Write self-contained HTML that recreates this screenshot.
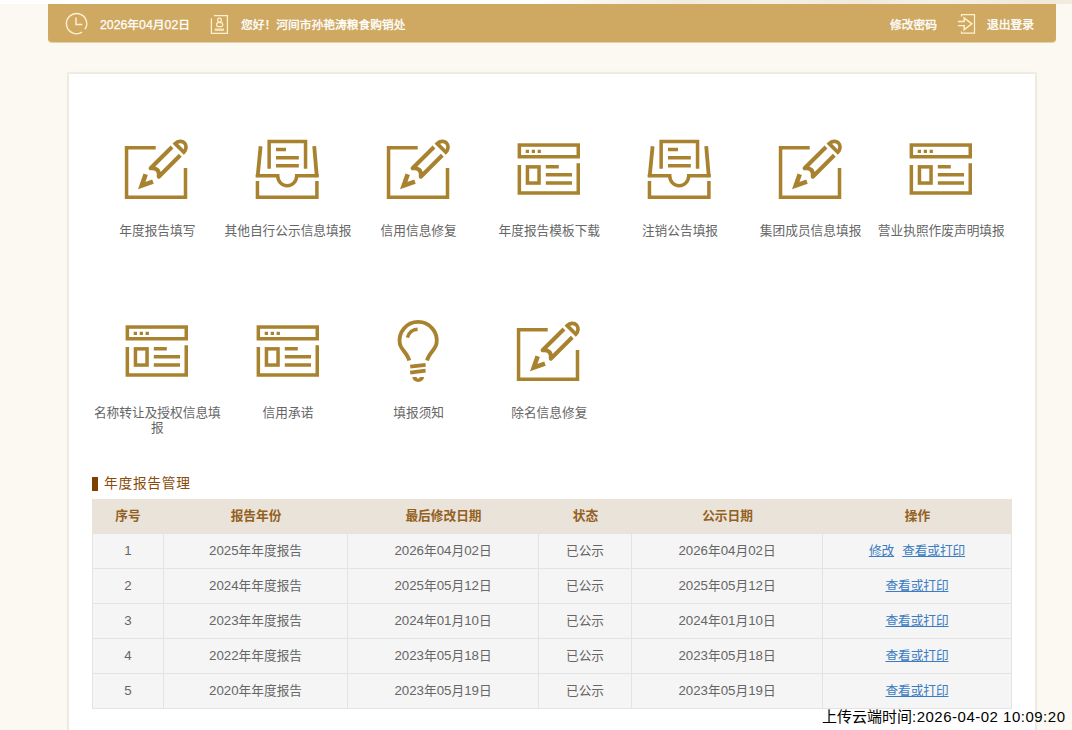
<!DOCTYPE html>
<html lang="zh-CN">
<head>
<meta charset="utf-8">
<title>企业信用信息公示系统</title>
<style>
*{box-sizing:border-box;margin:0;padding:0}
html,body{width:1072px;height:730px;overflow:hidden}
body{position:relative;background:#fbf9f1;font-family:"Liberation Sans","Noto Sans CJK SC",sans-serif;font-size:13px;color:#666;}
ul{list-style:none}
a{color:#3b7cc2;text-decoration:underline}
.deco{position:absolute;left:0;top:0;width:1072px;height:4px;background:linear-gradient(to right,#fff 0,#fff 50%,#f8f4ec 57%,#f1ebdf 64%,#f5f0e6 72%,#f0e9dc 80%,#f5f0e7 88%,#efe8da 96%,#f2ecdf 100%)}
.topbar{position:absolute;left:48px;top:4px;width:1008px;height:38px;background:#cfa961;border-radius:0 0 4px 4px;box-shadow:0 1px 0 rgba(207,169,97,.5);color:#fff;font-size:11.75px;line-height:39px}
.topbar span,.topbar a{position:absolute;top:.8px;color:#fff;text-decoration:none;white-space:nowrap;font-weight:400;-webkit-text-stroke:.35px #fff}
.topbar svg{position:absolute;left:0;top:0}
.card{position:absolute;left:69px;top:74px;width:966px;height:680px;background:#fff;box-shadow:0 0 0 2px rgba(70,70,50,.055),0 0 4px rgba(70,70,50,.08)}
.grid{position:absolute;left:23px;top:61px;width:930px}
.grid li{float:left;width:130.67px;height:182px;position:relative;text-align:center}
.grid li svg{position:absolute;left:50%;margin-left:-35px;top:0;width:70px;height:70px;overflow:visible}
.grid li p{position:absolute;left:-5px;right:-5px;top:88.7px;line-height:15.5px;font-size:12.7px;color:#666;padding:0 5px}
.ico{fill:none;stroke:#a8822f;stroke-width:3.5}
.icf{fill:#a8822f;stroke:none}
h3.tit{position:absolute;left:23px;top:401px;height:18px;line-height:18px;font-size:13.7px;font-weight:normal;color:#8a4b08;padding-left:12px;letter-spacing:.75px}
h3.tit:before{content:"";position:absolute;left:0;top:2px;width:6px;height:14px;background:#7f3f00}
table{position:absolute;left:23px;top:425px;width:920px;border-collapse:separate;border-spacing:0;table-layout:fixed;font-size:12.7px}
th{font-size:12.7px;height:35px;line-height:18px;padding:0;background:#e9e3da;color:#93601d;font-weight:bold;text-align:center;border:0;border-bottom:1px solid #e6e3dd}
td{height:35px;line-height:18px;padding:0;background:#f5f5f5;color:#666;text-align:center;border:0 solid #e3e3e3;border-width:0 1px 1px 0}
td:first-child{border-left-width:1px}
td .n{font-size:13.3px}
.topbar .n{font-size:12.3px;position:static;-webkit-text-stroke:.25px #fff}
td a{margin:0 2.3px;letter-spacing:-.1px}
.stamp{position:absolute;left:822px;top:707px;font-size:15px;line-height:20px;color:#000;white-space:nowrap}
.stamp i{font-style:normal;letter-spacing:.5px}
</style>
</head>
<body>
<div class="deco"></div>
<div class="topbar">
  <svg class="tbi" width="1008" height="39" viewBox="48 4 1008 39" fill="none" stroke="#fff1cf" stroke-width="1.25">
    <path d="M81.98 32.21A10.15 10.15 0 1 1 84.91 29.42" stroke-width="1.4"/><path d="M76 17.6V24.5H82.3" stroke-width="1.4"/>
    <path d="M214 15.6H227.4V33.4H211.4V18.3"/><circle cx="219.5" cy="20.1" r="1.9"/><rect x="216.6" y="22.6" width="6.1" height="3.9" rx="1.6"/><path d="M214.7 29.7H224.1" stroke-width="2.4" opacity=".8"/>
    <path d="M961.5 16.6V14.5H974.5V33.2H961.5V31.4"/><path d="M957.9 21.5H964.2V18L971.8 23.8L964.2 29.8V25.6H957.9" stroke-width="1.45"/>
  </svg>
  <span style="left:52px"><span class="n">2026</span>年<span class="n">04</span>月<span class="n">02</span>日</span>
  <span style="left:193px;letter-spacing:0">您好！河间市孙艳涛粮食购销处</span>
  <a style="left:842px;letter-spacing:0">修改密码</a>
  <a style="left:939px;letter-spacing:0">退出登录</a>
</div>

<div class="card">

<ul class="grid">
  <li><svg viewBox="0 0 70 70"><path class="ico" d="M33.7 12.65H4.55V62.25H63.5V33"/><g transform="translate(15.7 54) rotate(-45)"><path class="ico" style="stroke-width:4.6" d="M16 -4.7L5.3 .45L16 5.6"/><path class="ico" style="stroke-width:4.1;stroke-linejoin:round" d="M54 -5.5H23.8Q31 .6 23.6 6.2H54"/><path class="ico" style="stroke-width:3.7" d="M58.6 -5.5V6.6A7 6.05 0 0 0 58.6 -5.5Z"/></g></svg><p>年度报告填写</p></li>
  <li><svg viewBox="0 0 70 70"><path class="ico" d="M16.15 33.8V6.55H52.55V33.8"/><path class="ico" d="M23 14.45H33M23 22.65H45.8M23 30.85H45.8"/><path class="ico" style="stroke-width:3.8" d="M7.6 11.2L4.6 42M61.2 11.2L63.85 42"/><path class="ico" d="M2.75 40.85H24.7A9.5 9.9 0 0 0 43.7 40.85H65.65"/><path class="ico" d="M4.45 46.1V62.25H63.9V46.1"/></svg><p>其他自行公示信息填报</p></li>
  <li><svg viewBox="0 0 70 70"><path class="ico" d="M33.7 12.65H4.55V62.25H63.5V33"/><g transform="translate(15.7 54) rotate(-45)"><path class="ico" style="stroke-width:4.6" d="M16 -4.7L5.3 .45L16 5.6"/><path class="ico" style="stroke-width:4.1;stroke-linejoin:round" d="M54 -5.5H23.8Q31 .6 23.6 6.2H54"/><path class="ico" style="stroke-width:3.7" d="M58.6 -5.5V6.6A7 6.05 0 0 0 58.6 -5.5Z"/></g></svg><p>信用信息修复</p></li>
  <li><svg viewBox="0 0 70 70"><rect class="ico" x="5.35" y="10.05" width="58.9" height="11.7"/><path class="icf" d="M11.7 14.7h3.3v3.3h-3.3zM17.7 14.7h3.3v3.3h-3.3zM23.6 14.7h3.3v3.3h-3.3z"/><path class="ico" d="M5.35 30.1V57.95H64.25V28.2"/><rect class="ico" x="13.45" y="31.85" width="11.6" height="16.2"/><path class="ico" d="M31.8 31.65H44.8M31.8 39.85H58M31.8 47.95H58"/></svg><p>年度报告模板下载</p></li>
  <li><svg viewBox="0 0 70 70"><path class="ico" d="M16.15 33.8V6.55H52.55V33.8"/><path class="ico" d="M23 14.45H33M23 22.65H45.8M23 30.85H45.8"/><path class="ico" style="stroke-width:3.8" d="M7.6 11.2L4.6 42M61.2 11.2L63.85 42"/><path class="ico" d="M2.75 40.85H24.7A9.5 9.9 0 0 0 43.7 40.85H65.65"/><path class="ico" d="M4.45 46.1V62.25H63.9V46.1"/></svg><p>注销公告填报</p></li>
  <li><svg viewBox="0 0 70 70"><path class="ico" d="M33.7 12.65H4.55V62.25H63.5V33"/><g transform="translate(15.7 54) rotate(-45)"><path class="ico" style="stroke-width:4.6" d="M16 -4.7L5.3 .45L16 5.6"/><path class="ico" style="stroke-width:4.1;stroke-linejoin:round" d="M54 -5.5H23.8Q31 .6 23.6 6.2H54"/><path class="ico" style="stroke-width:3.7" d="M58.6 -5.5V6.6A7 6.05 0 0 0 58.6 -5.5Z"/></g></svg><p>集团成员信息填报</p></li>
  <li><svg viewBox="0 0 70 70"><rect class="ico" x="5.35" y="10.05" width="58.9" height="11.7"/><path class="icf" d="M11.7 14.7h3.3v3.3h-3.3zM17.7 14.7h3.3v3.3h-3.3zM23.6 14.7h3.3v3.3h-3.3z"/><path class="ico" d="M5.35 30.1V57.95H64.25V28.2"/><rect class="ico" x="13.45" y="31.85" width="11.6" height="16.2"/><path class="ico" d="M31.8 31.65H44.8M31.8 39.85H58M31.8 47.95H58"/></svg><p>营业执照作废声明填报</p></li>
  <li><svg viewBox="0 0 70 70"><rect class="ico" x="5.35" y="10.05" width="58.9" height="11.7"/><path class="icf" d="M11.7 14.7h3.3v3.3h-3.3zM17.7 14.7h3.3v3.3h-3.3zM23.6 14.7h3.3v3.3h-3.3z"/><path class="ico" d="M5.35 30.1V57.95H64.25V28.2"/><rect class="ico" x="13.45" y="31.85" width="11.6" height="16.2"/><path class="ico" d="M31.8 31.65H44.8M31.8 39.85H58M31.8 47.95H58"/></svg><p>名称转让及授权信息填报</p></li>
  <li><svg viewBox="0 0 70 70"><rect class="ico" x="5.35" y="10.05" width="58.9" height="11.7"/><path class="icf" d="M11.7 14.7h3.3v3.3h-3.3zM17.7 14.7h3.3v3.3h-3.3zM23.6 14.7h3.3v3.3h-3.3z"/><path class="ico" d="M5.35 30.1V57.95H64.25V28.2"/><rect class="ico" x="13.45" y="31.85" width="11.6" height="16.2"/><path class="ico" d="M31.8 31.65H44.8M31.8 39.85H58M31.8 47.95H58"/></svg><p>信用承诺</p></li>
  <li><svg viewBox="0 0 70 70"><path class="ico" style="stroke-width:3.9" d="M25.2 43.5C23.5 36 17 33 15.8 26.5A18.6 18.6 0 1 1 52.5 26.5C51.3 33 44.8 36 43.1 43.5"/><path class="ico" d="M23.4 20.7A11 11 0 0 1 33.6 12.15"/><path class="ico" style="stroke-width:3.7" d="M26.2 49.7L41.6 47.8M26.2 55.6L41.6 53.6"/><path class="icf" d="M28.4 60H32.6A1.6 1.5 0 0 0 35.8 60H40A5.8 4.9 0 0 1 28.4 60Z"/></svg><p>填报须知</p></li>
  <li><svg viewBox="0 0 70 70"><path class="ico" d="M33.7 12.65H4.55V62.25H63.5V33"/><g transform="translate(15.7 54) rotate(-45)"><path class="ico" style="stroke-width:4.6" d="M16 -4.7L5.3 .45L16 5.6"/><path class="ico" style="stroke-width:4.1;stroke-linejoin:round" d="M54 -5.5H23.8Q31 .6 23.6 6.2H54"/><path class="ico" style="stroke-width:3.7" d="M58.6 -5.5V6.6A7 6.05 0 0 0 58.6 -5.5Z"/></g></svg><p>除名信息修复</p></li>
</ul>

<h3 class="tit">年度报告管理</h3>
<table>
  <colgroup><col style="width:72px"><col style="width:184px"><col style="width:191px"><col style="width:93px"><col style="width:191px"><col style="width:189px"></colgroup>
  <tr><th>序号</th><th>报告年份</th><th>最后修改日期</th><th>状态</th><th>公示日期</th><th>操作</th></tr>
  <tr><td><span class="n">1</span></td><td><span class="n">2025</span>年年度报告</td><td><span class="n">2026</span>年<span class="n">04</span>月<span class="n">02</span>日</td><td>已公示</td><td><span class="n">2026</span>年<span class="n">04</span>月<span class="n">02</span>日</td><td><a>修改</a> <a>查看或打印</a></td></tr>
  <tr><td><span class="n">2</span></td><td><span class="n">2024</span>年年度报告</td><td><span class="n">2025</span>年<span class="n">05</span>月<span class="n">12</span>日</td><td>已公示</td><td><span class="n">2025</span>年<span class="n">05</span>月<span class="n">12</span>日</td><td><a>查看或打印</a></td></tr>
  <tr><td><span class="n">3</span></td><td><span class="n">2023</span>年年度报告</td><td><span class="n">2024</span>年<span class="n">01</span>月<span class="n">10</span>日</td><td>已公示</td><td><span class="n">2024</span>年<span class="n">01</span>月<span class="n">10</span>日</td><td><a>查看或打印</a></td></tr>
  <tr><td><span class="n">4</span></td><td><span class="n">2022</span>年年度报告</td><td><span class="n">2023</span>年<span class="n">05</span>月<span class="n">18</span>日</td><td>已公示</td><td><span class="n">2023</span>年<span class="n">05</span>月<span class="n">18</span>日</td><td><a>查看或打印</a></td></tr>
  <tr><td><span class="n">5</span></td><td><span class="n">2020</span>年年度报告</td><td><span class="n">2023</span>年<span class="n">05</span>月<span class="n">19</span>日</td><td>已公示</td><td><span class="n">2023</span>年<span class="n">05</span>月<span class="n">19</span>日</td><td><a>查看或打印</a></td></tr>
</table>
</div>
<div class="stamp">上传云端时间<i>:2026-04-02 10:09:20</i></div>
</body>
</html>
